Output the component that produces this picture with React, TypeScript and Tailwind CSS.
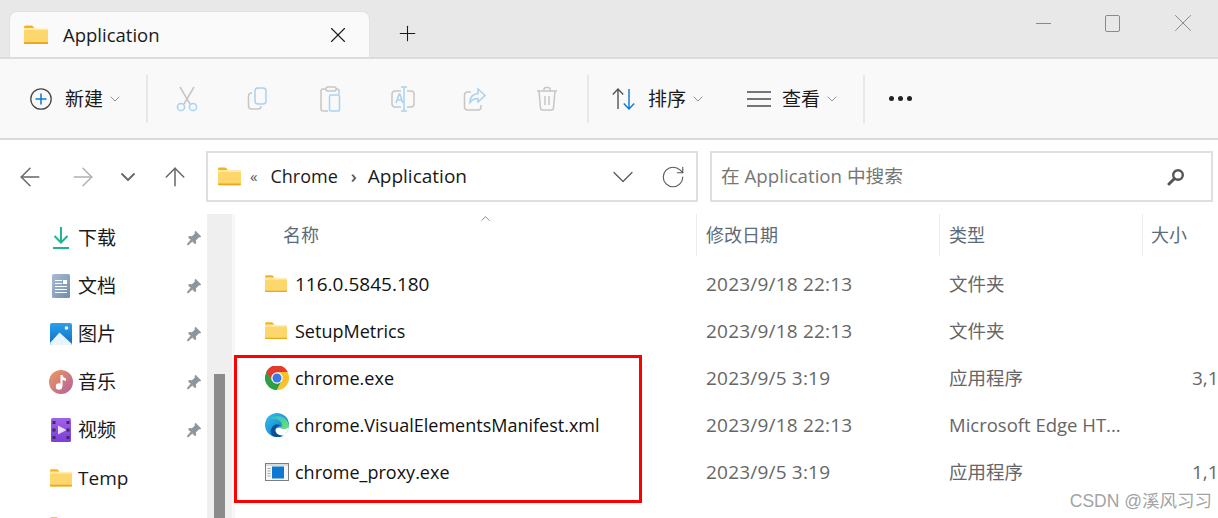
import { ArrowLeft, ArrowRight, ArrowUp, ChevronDown, ChevronUp, Plus, RotateCw, X } from "lucide-react";
import type { ReactNode } from "react";

const FONT = "font-['Open_Sans','Noto_Sans_CJK_SC',sans-serif]";

function FolderIcon({ size = 24 }: { size?: number }) {
  return (
    <svg width={size} height={size * 0.8} viewBox="0 0 24 19" className="shrink-0">
      <path d="M0 2.2C0 1 .8.3 1.8.3h5.4c.7 0 1.2.3 1.7.8L10.4 3H0z" fill="#f5b21c" />
      <path d="M0 3.600h22.800c.7 0 1.200.5 1.200 1.200v13c0 .7-.5 1.200-1.200 1.200H1.200C.5 19 0 18.500 0 17.800z" fill="#fdd76b" />
      <path d="M0 17h24v.8c0 .7-.5 1.200-1.200 1.200H1.200C.5 19 0 18.500 0 17.800z" fill="#eca81a" />
      <path d="M0 3h10l1.500 1H24v1H0z" fill="#ffe9a6" />
    </svg>
  );
}

function PinIcon() {
  return (
    <svg width="16" height="16" viewBox="0 0 16 16" className="shrink-0">
      <path d="M9.600.8 15.200 6.400 14 7.600 13 7.200 10 10.200 10.200 13 9 14.200 6.400 11.600 2 15.400.8 14.200 4.600 9.800 2 7.200 3.200 6 6 6.200 9 3.200 8.600 2z" fill="#8f969c" />
    </svg>
  );
}

function DownloadIcon() {
  return (
    <svg width="18" height="22" viewBox="0 0 18 22" fill="none" stroke="#1fb58f" strokeWidth="2">
      <path d="M9 0v15M2.500 9 9 15.500 15.500 9" />
      <path d="M1 21h16" />
    </svg>
  );
}

function DocsIcon() {
  return (
    <svg width="20" height="24" viewBox="0 0 20 24">
      <defs>
        <linearGradient id="docs" x1="0" y1="0" x2="1" y2="1">
          <stop offset="0" stopColor="#a9bdd3" />
          <stop offset="1" stopColor="#6f8daf" />
        </linearGradient>
      </defs>
      <rect x="1" width="18" height="24" rx="1.500" fill="url(#docs)" />
      <path d="M4 6h7v1H4zM4 9h7v1H4zM4 12h12v1H4zM4 15h12v1H4zM4 18h12v1H4z" fill="#fff" />
      <rect x="12" y="6" width="4" height="4" fill="#fff" />
    </svg>
  );
}

function PicturesIcon() {
  return (
    <svg width="22" height="22" viewBox="0 0 22 22">
      <defs>
        <linearGradient id="pics" x1="0" y1="0" x2="0" y2="1">
          <stop offset="0" stopColor="#2aa2ea" />
          <stop offset="1" stopColor="#0f6cc4" />
        </linearGradient>
      </defs>
      <rect width="22" height="22" rx="2" fill="url(#pics)" />
      <circle cx="16.500" cy="5" r="1.800" fill="#fff" />
      <path d="M0 20 9.500 9.500 21.500 20.500 21 22H1z" fill="#e9f4fc" />
    </svg>
  );
}

function MusicIcon() {
  return (
    <svg width="24" height="24" viewBox="0 0 24 24">
      <defs>
        <linearGradient id="music" x1="0" y1="0" x2="1" y2="1">
          <stop offset="0" stopColor="#f09a5c" />
          <stop offset="1" stopColor="#b0609e" />
        </linearGradient>
      </defs>
      <circle cx="12" cy="12" r="12" fill="url(#music)" />
      <circle cx="10" cy="16.500" r="3.200" fill="#fff" />
      <path d="M11.500 16.500V5h2c.3 2 1.500 3 3.500 3.200v2.600c-1.500 0-2.700-.5-3.500-1.300v7z" fill="#fff" />
    </svg>
  );
}

function VideoIcon() {
  return (
    <svg width="22" height="24" viewBox="0 0 22 24">
      <defs>
        <linearGradient id="video" x1="0" y1="0" x2="0" y2="1">
          <stop offset="0" stopColor="#a062e8" />
          <stop offset="1" stopColor="#7d3ddb" />
        </linearGradient>
      </defs>
      <rect x="1" width="20" height="24" rx="1.500" fill="url(#video)" />
      <path d="M8 7.500 16.500 12 8 16.500z" fill="#e8dcfa" />
      <path d="M2.500 3h3v3h-3zM2.500 10.500h3v3h-3zM2.500 18h3v3h-3zM16.500 3h3v3h-3zM16.500 10.500h3v3h-3zM16.500 18h3v3h-3z" fill="#3f2a66" />
    </svg>
  );
}

function ChromeIcon() {
  return (
    <svg width="24" height="24" viewBox="0 0 48 48" className="shrink-0">
      <path d="M24 13H46V13A24 24 0 0 0 2 13L14.470 29.500 24 24z" fill="#e33b2e" />
      <path d="M14.470 29.500 3.200 12A24 24 0 0 0 24 48L33.530 29.500 24 24z" fill="#2f9e44" />
      <path d="M33.530 29.500 24 48A24 24 0 0 0 44.800 12H24V24z" fill="#fbc02d" />
      <circle cx="24" cy="24" r="11.500" fill="#fff" />
      <circle cx="24" cy="24" r="9" fill="#3b78e7" />
    </svg>
  );
}

function EdgeIcon() {
  return (
    <svg width="24" height="24" viewBox="0 0 48 48" className="shrink-0">
      <defs>
        <linearGradient id="edgeA" x1="0" y1="0" x2="1" y2="1">
          <stop offset="0" stopColor="#35c1f1" />
          <stop offset="1" stopColor="#0a6fc0" />
        </linearGradient>
        <linearGradient id="edgeB" x1="0" y1="0" x2="1" y2="0.600">
          <stop offset="0" stopColor="#2fb6e0" />
          <stop offset="1" stopColor="#66dd77" />
        </linearGradient>
      </defs>
      <circle cx="24" cy="24" r="24" fill="url(#edgeA)" />
      <path d="M10 11A24 24 0 0 1 48 24c0 5-4 8-9 8-5 0-9-1-9-3 3-1 4-3 4-5 0-6-7-12-14-12-4 0-7 1-10-1z" fill="url(#edgeB)" />
      <path d="M30 26c-5 0-9 3-9 8 0 6 7 11 15 11 1 0 2 0 3-1a24 24 0 0 1-21 3C9 44 9 30 19 24c5-3 10-1 11 2z" fill="#0c4f95" />
      <path d="M30 29c2 2 5 3 9 3 4 0 7-2 9-5-1 6-4 12-9 17-8 3-18-2-18-10 0-3 4-5 9-5z" fill="#fff" />
    </svg>
  );
}

function ExeIcon() {
  return (
    <svg width="24" height="18" viewBox="0 0 24 18" className="shrink-0">
      <rect x=".5" y=".5" width="23" height="17" fill="#f7f7f7" stroke="#7d7d7d" />
      <rect x="1" y="1" width="22" height="2" fill="#dcdcdc" />
      <rect x="7" y="3.500" width="12" height="12" fill="#0f78d0" />
      <path d="M2.500 5h3v1h-3zM2.500 7.500h3v1h-3zM2.500 10h3v1h-3zM2.500 12.500h3v1h-3z" fill="#a8a8a8" />
    </svg>
  );
}

function ToolCell({ children }: { children: ReactNode }) {
  return <div className="flex w-[72px] items-center justify-center">{children}</div>;
}

function Separator() {
  return <div className="h-[48px] w-[2px] shrink-0 bg-[#e8e8e8]" />;
}

function ToolChevron() {
  return <ChevronDown size={16} strokeWidth={1.200} className="ml-[4px] shrink-0 text-[#777]" />;
}

const fadedGray = "#c6c6c6";
const fadedBlue = "#a8d1f2";

const disabledTools: ReactNode[] = [
  <svg key="cut" width="24" height="26" viewBox="0 0 24 26" fill="none" strokeWidth="1.500">
    <path d="M5 1 15 18M19 1 9 18" stroke={fadedGray} />
    <circle cx="6" cy="21" r="3.600" stroke={fadedBlue} />
    <circle cx="18" cy="21" r="3.600" stroke={fadedBlue} />
  </svg>,
  <svg key="copy" width="24" height="24" viewBox="0 0 24 24" fill="none" strokeWidth="1.500">
    <path d="M5 6H4.500A3 3 0 0 0 1.500 9v10a3 3 0 0 0 3 3H11a3 3 0 0 0 3-3" stroke={fadedGray} />
    <rect x="8" y="1" width="11" height="16" rx="3" stroke={fadedBlue} />
  </svg>,
  <svg key="paste" width="24" height="26" viewBox="0 0 24 26" fill="none" strokeWidth="1.500">
    <path d="M7 3H4a2 2 0 0 0-2 2v18a2 2 0 0 0 2 2h5M17 3h1a2 2 0 0 1 2 2v3" stroke={fadedGray} />
    <rect x="7" y="1" width="10" height="4" rx="1.500" stroke={fadedGray} />
    <rect x="10.500" y="9" width="10" height="16" rx="1.500" stroke={fadedBlue} />
  </svg>,
  <svg key="rename" width="24" height="26" viewBox="0 0 24 26" fill="none" strokeWidth="1.500">
    <path d="M10 5H4a3 3 0 0 0-3 3v10a3 3 0 0 0 3 3h6M16 5h4a3 3 0 0 1 3 3v10a3 3 0 0 1-3 3h-4" stroke={fadedGray} />
    <path d="M10 1h6M13 1v24M10 25h6M5 17l3.200-9h.6l3 9M6 14h5" stroke={fadedBlue} />
  </svg>,
  <svg key="share" width="24" height="24" viewBox="0 0 24 24" fill="none" strokeWidth="1.500">
    <path d="M8 5H4.500a3 3 0 0 0-3 3v12a3 3 0 0 0 3 3H15a3 3 0 0 0 3-3v-2" stroke={fadedGray} />
    <path d="M15 2 22 8.500 15 15v-3.500c-3.500 0-6 1-8 4 0-5 3-8.500 8-9z" stroke={fadedBlue} />
  </svg>,
  <svg key="delete" width="24" height="26" viewBox="0 0 24 26" fill="none" stroke={fadedGray} strokeWidth="1.500">
    <path d="M2 5h20M9 5V3.500A2 2 0 0 1 11 1.500h2a2 2 0 0 1 2 2V5" />
    <path d="M4 5l1.500 17a2 2 0 0 0 2 2h9a2 2 0 0 0 2-2L20 5M10 10v9M14 10v9" />
  </svg>,
];

const sidebarItems: { icon: ReactNode; label: string; pinned: boolean }[] = [
  { icon: <DownloadIcon />, label: "下载", pinned: true },
  { icon: <DocsIcon />, label: "文档", pinned: true },
  { icon: <PicturesIcon />, label: "图片", pinned: true },
  { icon: <MusicIcon />, label: "音乐", pinned: true },
  { icon: <VideoIcon />, label: "视频", pinned: true },
  { icon: <FolderIcon size={22} />, label: "Temp", pinned: false },
];

const files: { icon: ReactNode; name: string; numeric?: boolean; date: string; type: string; size: string }[] = [
  { icon: <FolderIcon size={22} />, name: "116.0.5845.180", numeric: true, date: "2023/9/18 22:13", type: "文件夹", size: "" },
  { icon: <FolderIcon size={22} />, name: "SetupMetrics", date: "2023/9/18 22:13", type: "文件夹", size: "" },
  { icon: <ChromeIcon />, name: "chrome.exe", date: "2023/9/5 3:19", type: "应用程序", size: "3,14" },
  { icon: <EdgeIcon />, name: "chrome.VisualElementsManifest.xml", date: "2023/9/18 22:13", type: "Microsoft Edge HT...", size: "" },
  { icon: <ExeIcon />, name: "chrome_proxy.exe", date: "2023/9/5 3:19", type: "应用程序", size: "1,14" },
];

export default function App() {
  return (
    <div className={`relative h-[518px] w-[1218px] overflow-hidden bg-white text-[#1a1a1a] ${FONT}`}>
      {/* title bar */}
      <div className="flex h-[57px] items-end justify-between bg-[#e8e8e8] pl-[9px]">
        <div className="flex items-end">
          <div className="flex h-[46px] w-[361px] items-center rounded-t-[8px] border-x border-t border-[#e2e2e2] bg-[#fafafa] pl-[14px] pr-[18px]">
            <FolderIcon size={24} />
            <span className="ml-[15px] flex-1 text-[18.5px]">Application</span>
            <X size={26} strokeWidth={1} />
          </div>
          <div className="flex h-[46px] w-[74px] items-center justify-center pb-[1px]">
            <Plus size={25} strokeWidth={1} />
          </div>
        </div>
        <div className="mb-[24px] flex items-center pr-[25px] text-[#8a8a8a]">
          <div className="flex w-[20px] justify-center">
            <div className="h-[1px] w-[15px] bg-[#8a8a8a]" />
          </div>
          <div className="ml-[49px] flex w-[20px] justify-center">
            <div className="h-[17px] w-[15px] rounded-[2px] border-[1.500px] border-[#8a8a8a]" />
          </div>
          <div className="ml-[51px] flex h-[20px] w-[20px] items-center justify-center">
            <X size={30} strokeWidth={0.800} className="shrink-0" />
          </div>
        </div>
      </div>

      {/* command bar */}
      <div className="flex h-[83px] items-center border-y-2 border-t-[#dcdcdc] border-b-[#d9d9d9] bg-[#f9f9f9] text-[19px]">
        <div className="flex w-[125px] items-center pl-[30px]">
          <svg width="22" height="22" viewBox="0 0 22 22" fill="none" className="shrink-0">
            <circle cx="11" cy="11" r="10.200" stroke="#4a4a4a" strokeWidth="1.300" />
            <path d="M11 5.500v11M5.500 11h11" stroke="#0a78d4" strokeWidth="1.500" />
          </svg>
          <span className="ml-[13px] whitespace-nowrap pt-[1px]">新建</span>
          <ToolChevron />
        </div>
        <div className="w-[21px]" />
        <Separator />
        <div className="ml-[3px] flex h-full">
          {disabledTools.map((tool, i) => (
            <ToolCell key={i}>{tool}</ToolCell>
          ))}
        </div>
        <div className="w-[4px]" />
        <Separator />
        <div className="flex w-[134px] items-center pl-[23px]">
          <svg width="24" height="22" viewBox="0 0 24 22" fill="none" strokeWidth="1.400" className="shrink-0">
            <path d="M6 21V1M.8 6.500 6 1l5.200 5.500" stroke="#555" />
            <path d="M17 1v20M11.800 15.500 17 21l5.200-5.500" stroke="#0a78d4" />
          </svg>
          <span className="ml-[12px] whitespace-nowrap pt-[1px]">排序</span>
          <ToolChevron />
        </div>
        <div className="flex w-[140px] items-center pl-[24px]">
          <svg width="24" height="16" viewBox="0 0 24 16" fill="none" stroke="#4a4a4a" strokeWidth="1.500" className="shrink-0">
            <path d="M0 1h24M0 8h24M0 15h24" />
          </svg>
          <span className="ml-[11px] whitespace-nowrap pt-[1px]">查看</span>
          <ToolChevron />
        </div>
        <Separator />
        <div className="ml-[24px] flex gap-[4px]">
          <span className="h-[5px] w-[5px] rounded-full bg-[#222]" />
          <span className="h-[5px] w-[5px] rounded-full bg-[#222]" />
          <span className="h-[5px] w-[5px] rounded-full bg-[#222]" />
        </div>
      </div>

      {/* address row */}
      <div className="flex h-[74px] items-center bg-white pb-[1px]">
        <div className="flex w-[206px] items-center pl-[15px]">
          <ArrowLeft size={30} strokeWidth={1.200} className="shrink-0 text-[#666]" />
          <ArrowRight size={30} strokeWidth={1.200} className="ml-[23px] shrink-0 text-[#b0b0b0]" />
          <ChevronDown size={24} strokeWidth={1.800} className="ml-[18px] shrink-0 text-[#666]" />
          <ArrowUp size={30} strokeWidth={1.200} className="ml-[20px] shrink-0 text-[#666]" />
        </div>
        <div className="flex h-[51px] w-[492px] items-center border-2 border-[#dfdfdf] pl-[10px] pr-[10px]">
          <FolderIcon size={23} />
          <span className="ml-[9px] text-[15px] text-[#555]">«</span>
          <span className="ml-[13px] text-[18px]">Chrome</span>
          <span className="ml-[13px] text-[18px] font-semibold text-[#555]">›</span>
          <span className="ml-[11px] text-[19px]">Application</span>
          <ChevronDown size={36} strokeWidth={0.800} className="ml-auto shrink-0 text-[#555]" />
          <RotateCw size={26} strokeWidth={1} className="ml-[19px] shrink-0 text-[#555]" />
        </div>
        <div className="ml-[12px] flex h-[51px] w-[503px] items-center border-2 border-[#dfdfdf] pl-[9px] pr-[26px] text-[18.7px] text-[#767676]">
          <span className="flex-1">在 Application 中搜索</span>
          <svg width="18" height="18" viewBox="0 0 18 18" fill="none" stroke="#555" className="shrink-0">
            <circle cx="11" cy="7" r="4.800" strokeWidth="2.400" />
            <path d="M7.500 10.500 2 16" strokeWidth="3" strokeLinecap="round" />
          </svg>
        </div>
      </div>

      {/* body */}
      <div className="flex h-[304px]">
        <div className="w-[207px] shrink-0 overflow-hidden pl-[49px] pr-[5px] text-[19px]">
          {sidebarItems.map((item) => (
            <div key={item.label} className="flex h-[48px] items-center">
              <div className="flex w-[24px] shrink-0 justify-center">{item.icon}</div>
              <span className="ml-[5px] flex-1 pt-[1px]">{item.label}</span>
              {item.pinned && <PinIcon />}
            </div>
          ))}
          <div className="ml-[1px] mt-[15px]">
            <FolderIcon size={22} />
          </div>
        </div>
        <div className="flex w-[25px] shrink-0 flex-col justify-end bg-[#efefef] px-[7px]">
          <div className="h-[144px] bg-[#8b8b8b]" />
        </div>
        <div className="w-[3px] shrink-0 bg-[#f7f7f7]" />
        <div className="min-w-0 flex-1 overflow-hidden text-[18px]">
          <div className="relative flex h-[46px] items-start text-[#5d6a78]">
            <ChevronUp size={15} strokeWidth={1.200} className="absolute left-[243px] top-[-3px] text-[#666]" />
            <div className="w-[461px] shrink-0 pl-[48px] pt-[8px]">名称</div>
            <div className="h-[42px] w-[1px] shrink-0 bg-[#ececec]" />
            <div className="w-[242px] shrink-0 pl-[9px] pt-[8px]">修改日期</div>
            <div className="h-[42px] w-[1px] shrink-0 bg-[#ececec]" />
            <div className="w-[202px] shrink-0 pl-[9px] pt-[8px]">类型</div>
            <div className="h-[42px] w-[1px] shrink-0 bg-[#ececec]" />
            <div className="pl-[8px] pt-[8px]">大小</div>
          </div>
          {files.map((file) => (
            <div key={file.name} className="flex h-[47px] items-center whitespace-nowrap">
              <div className="flex w-[462px] shrink-0 items-center pl-[30px]">
                <div className="flex w-[30px] shrink-0 justify-start">{file.icon}</div>
                <span className={file.numeric ? "pt-[1px] text-[19px] text-[#111]" : "pt-[1px] text-[#111]"}>{file.name}</span>
              </div>
              <div className="w-[243px] shrink-0 pl-[9px] pt-[1px] text-[19px] tracking-[0.2px] text-[#666]">{file.date}</div>
              <div className="w-[203px] shrink-0 pl-[9px] text-[18.5px] text-[#666]">{file.type}</div>
              <div className="shrink-0 pl-[49px] pt-[1px] text-[19px] text-[#666]">{file.size}</div>
            </div>
          ))}
        </div>
      </div>

      {/* annotation and watermark */}
      <div className="absolute left-[234px] top-[355px] h-[148px] w-[408px] border-[3px] border-[#ff0000]" />
      <div className="absolute right-[6px] top-[488px] font-['Liberation_Sans','Noto_Sans_CJK_SC',sans-serif] text-[17.5px] text-[#a3a3a3]">
        CSDN @溪风习习
      </div>
    </div>
  );
}
